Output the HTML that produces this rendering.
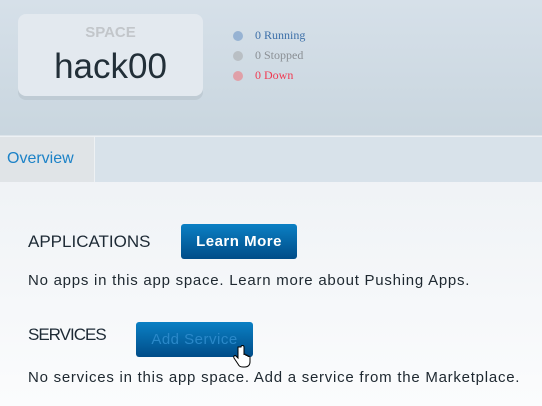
<!DOCTYPE html>
<html><head><style>
*{margin:0;padding:0;box-sizing:border-box}
body{width:542px;height:406px;overflow:hidden;font-family:"Liberation Sans",sans-serif;background:linear-gradient(#e6ebf0,#fbfcfd);position:relative}
.hdr{position:absolute;left:0;top:0;width:542px;height:136px;background:linear-gradient(#d6e0e9,#c9d6df);border-bottom:1px solid #dde4ea}
.card{position:absolute;left:18px;top:14px;width:185px;height:82px;border-radius:8px;background:#e3e9ef;box-shadow:0 4px 0 #bfcbd4;text-align:center}
.sp{position:absolute;top:10px;width:100%;font-size:15px;font-weight:bold;color:#c2c6ca}
.hk{position:absolute;top:33px;width:100%;font-size:35px;color:#222f38}
.st{position:absolute;left:233px;font-family:"Liberation Serif",serif;font-size:12px}
.st i{position:absolute;left:0;top:3px;width:10px;height:10px;border-radius:50%}
.st span{position:absolute;left:22px;top:0;white-space:nowrap}
.tabs{position:absolute;left:0;top:137px;width:542px;height:45px;background:#d8e2ea}
.tab{position:absolute;left:0;top:0;width:95px;height:45px;background:#e0e4e7;border-right:1px solid #eef1f3;color:#1c82c7;font-size:16px;padding:13px 0 0 7px}
.h{position:absolute;left:28px;font-size:17px;color:#1d2a35}
.btn{position:absolute;height:35px;border-radius:3px;background:linear-gradient(#0b80c4,#004c88);font-size:15px;font-weight:bold;text-align:center;line-height:35px;letter-spacing:.5px}
.p{position:absolute;left:28px;font-size:15px;color:#1e2830;white-space:nowrap;letter-spacing:.75px}
</style></head><body>
<div class="hdr">
 <div class="card"><div class="sp">SPACE</div><div class="hk">hack00</div></div>
 <div class="st" style="top:28px"><i style="background:#97b3d3"></i><span style="color:#3c6fa8">0 Running</span></div>
 <div class="st" style="top:48px"><i style="background:#b9bfc4"></i><span style="color:#8a8f94">0 Stopped</span></div>
 <div class="st" style="top:68px"><i style="background:#e0a0a8"></i><span style="color:#f03a52">0 Down</span></div>
</div>
<div class="tabs"><div class="tab">Overview</div></div>
<div class="h" style="top:232px">APPLICATIONS</div>
<div class="btn" style="left:181px;top:224px;width:116px;color:#fff">Learn More</div>
<div class="p" style="top:272px">No apps in this app space. Learn more about Pushing Apps.</div>
<div class="h" style="top:325px;letter-spacing:-1px">SERVICES</div>
<div class="btn" style="left:136px;top:322px;width:117px;color:#2a88c9;font-weight:normal">Add Service</div>
<svg style="position:absolute;left:232px;top:344px" width="20" height="26" viewBox="0 0 20 26"><path d="M6 3v11l-2-2c-1-1-3 0-2 2l4 6c1 2 2 3 5 3h2c3 0 5-2 5-5v-5c0-1-2-1-2 0v-1c0-1-2-1-2 0v-1c0-1-2-1-2 0V3c0-2-3-2-3 0z" fill="#fff" stroke="#000" stroke-width="1"/></svg>
<div class="p" style="top:369px">No services in this app space. Add a service from the Marketplace.</div>
</body></html>
